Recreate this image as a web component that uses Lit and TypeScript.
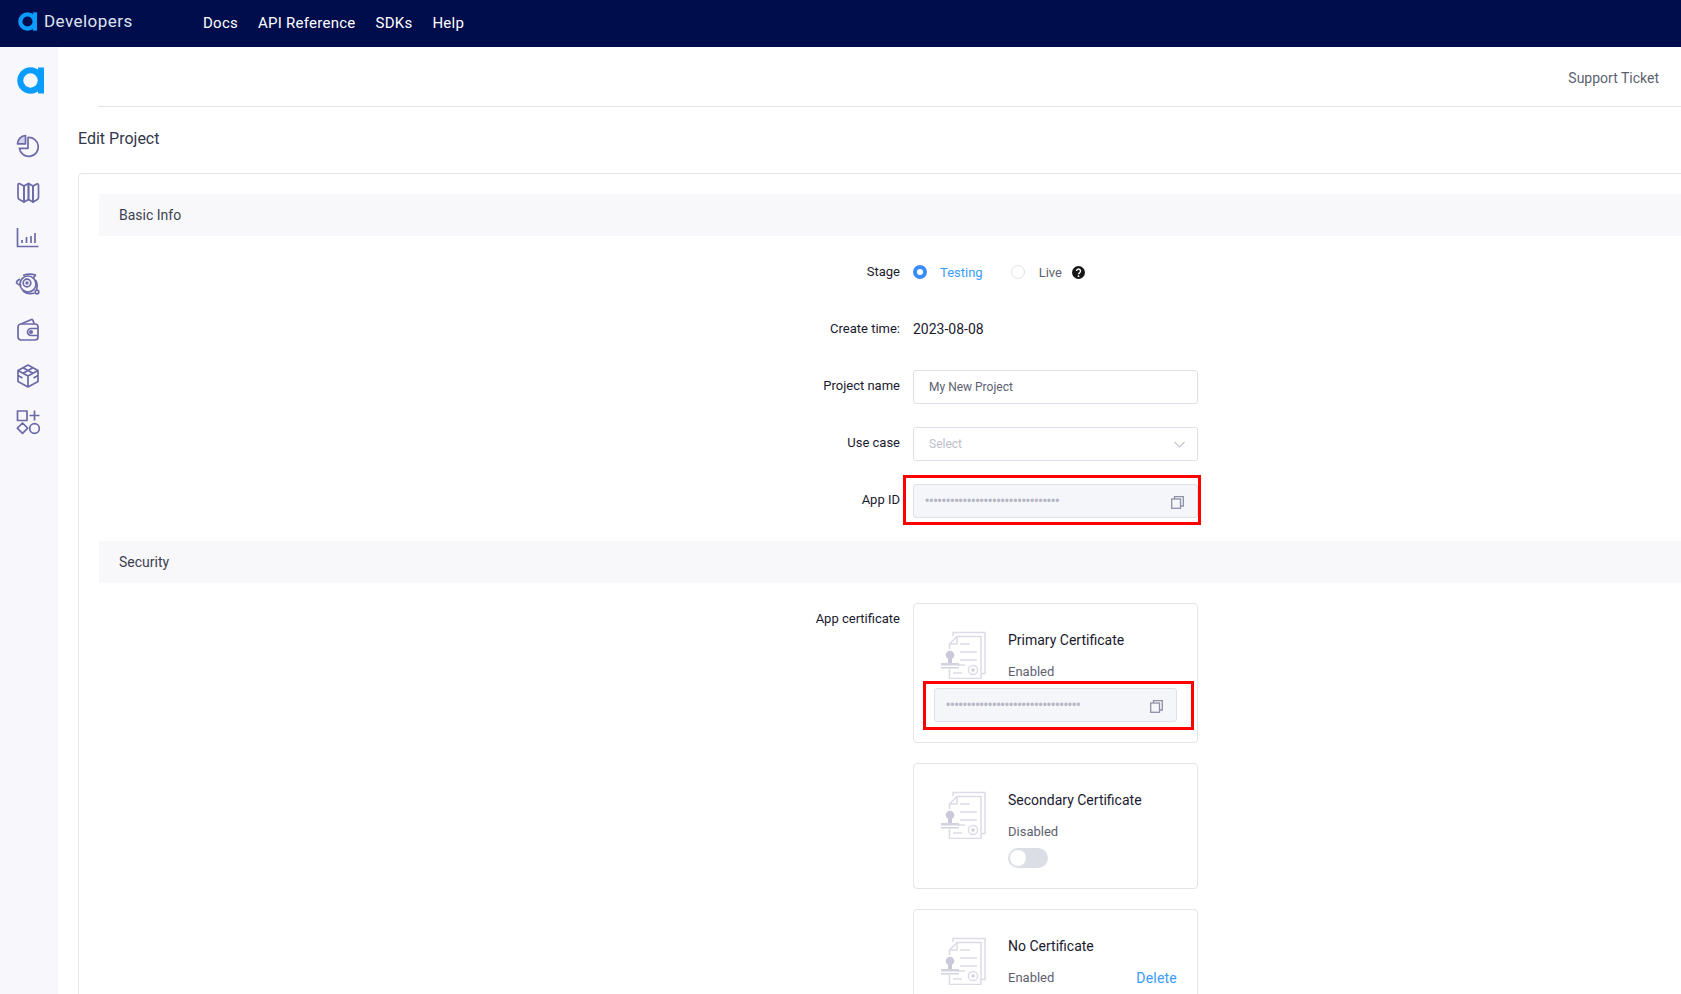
import { LitElement, html, css, svg } from "lit";
import { customElement } from "lit/decorators.js";

const logo = (size: number) => html`<svg width=${size} height=${size} viewBox="0 0 27 27">
  <circle cx="13.500" cy="13.500" r="13.200" fill="#0a9dff"/>
  <path d="M21 .5h6v26h-6z" fill="#0a9dff"/>
  <circle cx="13.500" cy="13.500" r="7.200" fill="currentColor"/>
</svg>`;

const navIcons = [
  svg`<path d="M13 4.500a9.500 9.500 0 1 1-8.600 10.800H13z"/><path d="M10.500 2.500a8.500 8.500 0 0 0-8 8.300h8z" fill="#d5d3e8"/>`,
  svg`<path d="M3 6c0-1.200.8-1.700 1.800-1.200L9 7v16l-4.200-2.200C3.800 20.300 3 19.500 3 18.500z"/><path d="M9 7l4.500-2.500V20.500L9 23z"/><path d="M13.500 4.500 18 7v16l-4.500-2.500z"/><path d="M18 7l3.700-2c.9-.4 1.800.1 1.800 1.200V18.500c0 1-.6 1.700-1.500 2.200L18 23z"/>`,
  svg`<path d="M2.500 3v18.500h21"/><path d="M7 18v-3M11.500 18v-6M16 18v-7M20 18V8"/>`,
  svg`<circle cx="13" cy="13" r="8"/><circle cx="12" cy="12" r="3.800"/><circle cx="12" cy="12" r=".8" fill="#6c69a8"/><path d="M5 8C2.800 9 1.500 10.500 1.500 12c1.500 1.500 3.500 2.200 5 2.500M8 4.500c4-1.500 9-1.500 12.500-.5-.5 1-1.500 2-2.500 3.500M20.500 9c2 3.500 2 7 1 10"/><circle cx="22" cy="21" r="1.800"/><path d="M8 20c3 2.500 7 3.200 11.500 2"/>`,
  svg`<path d="M6 7l10.500-4.500a1 1 0 0 1 1.300.6L19.300 7"/><rect x="3" y="7" width="20" height="16" rx="3"/><path d="M23 11.500h-7a3.500 3.500 0 0 0 0 7h7"/><circle cx="16" cy="15" r="1.200" fill="#6c69a8"/>`,
  svg`<path d="M13 2 23 7.500v11L13 24 3 18.500v-11z"/><path d="M8 4.800 18 10.300M18 4.800 8 10.300"/><path d="M3 7.500 13 13 23 7.500M13 13v11"/><path d="M3 12.500 7.500 15M23 12.500 18.500 15"/>`,
  svg`<rect x="2.500" y="2" width="9.500" height="9.500"/><path d="M19.500 1.500v10M14.500 6.500h10"/><path d="M7.500 14l5.200 5.200-5.200 5.200-5.200-5.200z"/><circle cx="19.500" cy="19.500" r="4.800"/>`,
];

const certIcon = html`<svg class="cert" width="45" height="48" viewBox="0 0 45 48" fill="none" stroke="#dcdce8" stroke-width="1.500">
  <path d="M17 1.500h27V42.500h-4"/>
  <path d="M12 5V1.500h5"/>
  <path d="M8.500 13 16 5.500h24V47.500H8.500V38"/>
  <path d="M8.500 18v-5h7.500V5.500"/>
  <path d="M19 13h10M19 21h17M19 29h17M17 34h7M12 42h9" stroke-width="1.500"/>
  <circle cx="32" cy="39" r="4.600"/>
  <circle cx="32" cy="39" r="1.700" fill="#cfcfde" stroke="none"/>
  <circle cx="9" cy="24" r="4.300" fill="#c9c9d9" stroke="none"/>
  <path d="M7 26h4v6H7z" fill="#c9c9d9" stroke="none"/>
  <path d="M0 32h18v2.500H0zM0 36h18v1.500H0z" fill="#d2d2e0" stroke="none"/>
</svg>`;

const copyIcon = html`<svg class="copy" width="13" height="13" viewBox="0 0 13 13" fill="none" stroke="#8f90a6" stroke-width="1.300">
  <rect x="0.700" y="3" width="8.800" height="9.300"/>
  <path d="M3.500 3V0.700h8.800v9.300H9.500"/>
</svg>`;

const DOTS = "••••••••••••••••••••••••••••••••";

@customElement("app-root")
export class AppRoot extends LitElement {
  static styles = css`
    :host {
      display: block;
      height: 994px;
      overflow: hidden;
      font-family: Roboto, "Liberation Sans", sans-serif;
      color: #1a1a2e;
      background: #fff;
    }
    .top {
      height: 47px;
      background: #000d4d;
      display: flex;
      align-items: center;
      color: #fff;
    }
    .brand {
      display: flex;
      align-items: center;
      width: 203px;
      padding-left: 18px;
      box-sizing: border-box;
      gap: 7px;
      color: #000d4d;
      height: 100%;
      padding-bottom: 5px;
    }
    .brand span {
      color: #dfe3f2;
      font-size: 17px;
      letter-spacing: 0.45px;
    }
    .nav {
      display: flex;
      gap: 20px;
      font-size: 15px;
      letter-spacing: 0.25px;
      padding-bottom: 2px;
    }
    .layout {
      display: flex;
      height: 947px;
    }
    .side {
      width: 58px;
      flex: none;
      background: #f8f8fc;
      display: flex;
      flex-direction: column;
      align-items: center;
      color: #f8f8fc;
      padding-top: 20px;
      box-sizing: border-box;
    }
    .side-logo {
      margin-left: 3px;
      height: 27px;
      margin-bottom: 39px;
    }
    .ico {
      width: 26px;
      height: 26px;
      margin: 0 2px 20px 0;
      display: block;
      stroke: #6c69a8;
      stroke-width: 1.700;
      stroke-linejoin: round;
      fill: none;
    }
    .main {
      flex: 1;
      min-width: 0;
      overflow: hidden;
    }
    .head {
      margin-left: 40px;
      height: 60px;
      border-bottom: 1px solid #e3e3ea;
      display: flex;
      justify-content: flex-end;
      align-items: center;
      padding: 2px 22px 0 0;
      box-sizing: border-box;
      font-size: 14px;
      color: #5d5f70;
    }
    h1 {
      margin: 0 0 0 20px;
      font-size: 16px;
      font-weight: 400;
      line-height: 20px;
      padding: 22px 0 24px;
      color: #33374a;
    }
    .card {
      margin-left: 20px;
      width: 1700px;
      border: 1px solid #e3e3ea;
      border-radius: 4px;
      padding: 20px;
      box-sizing: border-box;
    }
    .section {
      background: #f8f8fb;
      height: 42px;
      padding-left: 20px;
      display: flex;
      align-items: center;
      font-size: 14px;
      color: #3c3f50;
      margin-bottom: 20px;
    }
    .section.second {
      margin-top: 23px;
    }
    .row {
      display: grid;
      grid-template-columns: 801px 285px;
      column-gap: 13px;
      margin-bottom: 23px;
      align-items: start;
      min-height: 34px;
    }
    .row:last-of-type {
      margin-bottom: 0;
    }
    .label {
      font-size: 13px;
      line-height: 32px;
      text-align: right;
      color: #1a1a2e;
    }
    .value {
      min-height: 32px;
      display: flex;
      align-items: center;
      font-size: 13px;
    }
    .date {
      font-size: 14px;
    }
    .radio {
      width: 14px;
      height: 14px;
      border-radius: 50%;
      border: 1px solid #e0e0e8;
      box-sizing: border-box;
      flex: none;
      background: #fff;
    }
    .radio.on {
      border: 4.500px solid #3a8dff;
    }
    .testing {
      color: #3a9bff;
      margin: 0 28px 0 13px;
    }
    .live {
      color: #5d5f70;
      margin: 0 10px 0 14px;
    }
    .input {
      position: relative;
      height: 34px;
      width: 285px;
      border: 1px solid #e0e0ea;
      border-radius: 3px;
      box-sizing: border-box;
      display: flex;
      align-items: center;
      justify-content: space-between;
      padding: 0 12px 0 15px;
      font-size: 12px;
      color: #5d5f70;
    }
    .input.placeholder {
      color: #bcbecb;
    }
    .input.ro {
      background: #f5f6fa;
      padding: 0 13px 0 11px;
      color: #b5b7c6;
      font-family: "Liberation Sans", sans-serif;
      line-height: 1;
    }
    .input.ro.small {
      width: 243px;
      margin: 6px 0 0 20px;
    }
    .copy {
      flex: none;
      margin-top: 2px;
    }
    .mark {
      position: absolute;
      border: 3px solid #f00;
      box-sizing: border-box;
      pointer-events: none;
    }
    .mark.a {
      top: -10px;
      left: -11px;
      right: -4px;
      bottom: -8px;
    }
    .mark.b {
      top: -8px;
      left: -12px;
      right: -18px;
      bottom: -9px;
    }
    .certs {
      display: flex;
      flex-direction: column;
      gap: 20px;
    }
    .cert-card {
      border: 1px solid #e3e3ea;
      border-radius: 4px;
      box-sizing: border-box;
      padding: 26px 20px 20px 0;
    }
    .cert-top {
      display: flex;
      padding-left: 27px;
      gap: 22px;
    }
    .cert {
      flex: none;
      margin-top: 1px;
    }
    .cert-text {
      flex: 1;
      min-width: 0;
    }
    .title {
      font-size: 14px;
      line-height: 20px;
      color: #1a1a2e;
    }
    .status {
      margin-top: 12px;
      font-size: 13px;
      line-height: 20px;
      color: #5d5f70;
      display: flex;
      justify-content: space-between;
    }
    .delete {
      color: #3a9bff;
      font-size: 14px;
      letter-spacing: 0.2px;
    }
    .switch {
      margin-top: 6px;
      width: 40px;
      height: 20px;
      background: #dcdee6;
      border-radius: 10px;
      padding: 2px;
      box-sizing: border-box;
    }
    .switch i {
      display: block;
      width: 16px;
      height: 16px;
      border-radius: 50%;
      background: #fff;
    }
  `;

  render() {
    return html`
      <div class="top">
        <div class="brand">${logo(19)}<span>Developers</span></div>
        <div class="nav">
          <span>Docs</span><span>API Reference</span><span>SDKs</span><span>Help</span>
        </div>
      </div>
      <div class="layout">
        <aside class="side">
          <div class="side-logo">${logo(27)}</div>
          ${navIcons.map((p) => html`<svg class="ico" viewBox="0 0 26 26">${p}</svg>`)}
        </aside>
        <main class="main">
          <div class="head"><span>Support Ticket</span></div>
          <h1>Edit Project</h1>
          <div class="card">
            <div class="section">Basic Info</div>
            <div class="row">
              <div class="label">Stage</div>
              <div class="value">
                <span class="radio on"></span><span class="testing">Testing</span>
                <span class="radio"></span><span class="live">Live</span>
                <svg width="13" height="13" viewBox="0 0 13 13">
                  <circle cx="6.500" cy="6.500" r="6.500" fill="#161616"/>
                  <path d="M4.500 5a2 2 0 1 1 3 1.800c-.7.4-1 .8-1 1.500" fill="none" stroke="#fff" stroke-width="1.400"/>
                  <circle cx="6.500" cy="10.200" r=".9" fill="#fff"/>
                </svg>
              </div>
            </div>
            <div class="row">
              <div class="label">Create time:</div>
              <div class="value date">2023-08-08</div>
            </div>
            <div class="row">
              <div class="label">Project name</div>
              <div class="input">My New Project</div>
            </div>
            <div class="row">
              <div class="label">Use case</div>
              <div class="input placeholder">
                Select
                <svg width="11" height="7" viewBox="0 0 11 7" fill="none" stroke="#c3c5d2" stroke-width="1.100"><path d="M.5 1l5 5 5-5"/></svg>
              </div>
            </div>
            <div class="row">
              <div class="label">App ID</div>
              <div class="input ro"><span>${DOTS}</span>${copyIcon}<div class="mark a"></div></div>
            </div>
            <div class="section second">Security</div>
            <div class="row">
              <div class="label">App certificate</div>
              <div class="certs">
                <div class="cert-card">
                  <div class="cert-top">
                    ${certIcon}
                    <div class="cert-text">
                      <div class="title">Primary Certificate</div>
                      <div class="status">Enabled</div>
                    </div>
                  </div>
                  <div class="input ro small"><span>${DOTS}</span>${copyIcon}<div class="mark b"></div></div>
                </div>
                <div class="cert-card">
                  <div class="cert-top">
                    ${certIcon}
                    <div class="cert-text">
                      <div class="title">Secondary Certificate</div>
                      <div class="status">Disabled</div>
                      <div class="switch"><i></i></div>
                    </div>
                  </div>
                </div>
                <div class="cert-card">
                  <div class="cert-top">
                    ${certIcon}
                    <div class="cert-text">
                      <div class="title">No Certificate</div>
                      <div class="status">Enabled<span class="delete">Delete</span></div>
                    </div>
                  </div>
                </div>
              </div>
            </div>
          </div>
        </main>
      </div>
    `;
  }
}
